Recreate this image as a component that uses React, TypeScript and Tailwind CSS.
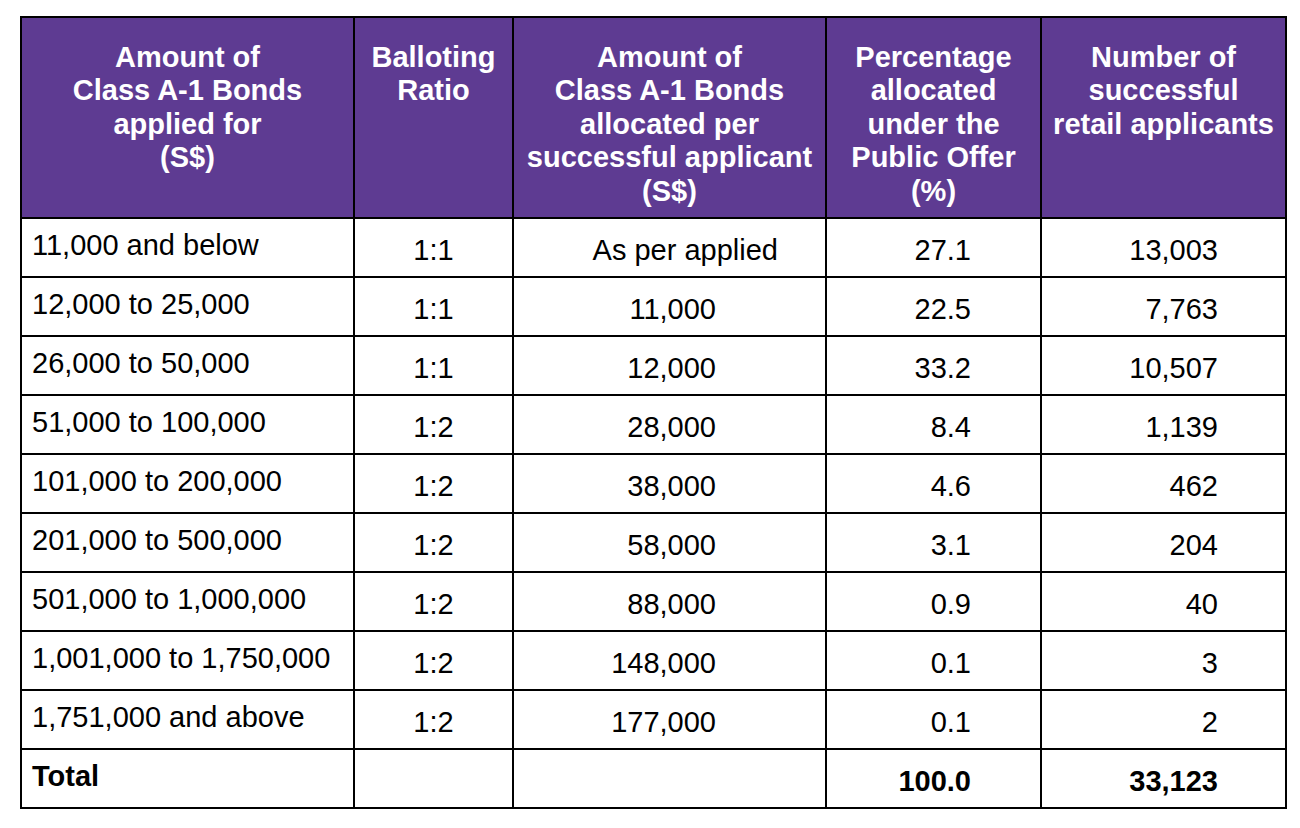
type Row = {
  range: string;
  ratio: string;
  allocated: string;
  pct: string;
  count: string;
  bold?: boolean;
};

const ROWS: Row[] = [
  { range: '11,000 and below', ratio: '1:1', allocated: 'As per applied', pct: '27.1', count: '13,003' },
  { range: '12,000 to 25,000', ratio: '1:1', allocated: '11,000', pct: '22.5', count: '7,763' },
  { range: '26,000 to 50,000', ratio: '1:1', allocated: '12,000', pct: '33.2', count: '10,507' },
  { range: '51,000 to 100,000', ratio: '1:2', allocated: '28,000', pct: '8.4', count: '1,139' },
  { range: '101,000 to 200,000', ratio: '1:2', allocated: '38,000', pct: '4.6', count: '462' },
  { range: '201,000 to 500,000', ratio: '1:2', allocated: '58,000', pct: '3.1', count: '204' },
  { range: '501,000 to 1,000,000', ratio: '1:2', allocated: '88,000', pct: '0.9', count: '40' },
  { range: '1,001,000 to 1,750,000', ratio: '1:2', allocated: '148,000', pct: '0.1', count: '3' },
  { range: '1,751,000 and above', ratio: '1:2', allocated: '177,000', pct: '0.1', count: '2' },
  { range: 'Total', ratio: '', allocated: '', pct: '100.0', count: '33,123', bold: true },
];

const HEADERS: string[][] = [
  ['Amount of', 'Class A-1 Bonds', 'applied for', '(S$)'],
  ['Balloting', 'Ratio'],
  ['Amount of', 'Class A-1 Bonds', 'allocated per', 'successful applicant', '(S$)'],
  ['Percentage', 'allocated', 'under the', 'Public Offer', '(%)'],
  ['Number of', 'successful', 'retail applicants'],
];

const cell = 'border-2 border-black align-top h-[59px] p-0';

export default function App() {
  return (
    <div className="min-h-screen bg-white pt-[16px] pl-[20px] font-['Liberation_Sans',Arial,sans-serif] text-[29px] leading-[33.4px] text-black">
      <table className="table-fixed border-collapse w-[1265px]">
        <colgroup>
          <col className="w-[333px]" />
          <col className="w-[159px]" />
          <col className="w-[313px]" />
          <col className="w-[215px]" />
          <col className="w-[245px]" />
        </colgroup>
        <thead>
          <tr className="h-[201px]">
            {HEADERS.map((lines, i) => (
              <th
                key={i}
                className="border-2 border-black bg-[#5e3b92] align-top pt-[23px] px-0 text-center font-bold text-white"
              >
                {lines.map((l) => (
                  <div key={l} className="whitespace-nowrap">{l}</div>
                ))}
              </th>
            ))}
          </tr>
        </thead>
        <tbody>
          {ROWS.map((r) => (
            <tr key={r.range} className={r.bold ? 'font-bold' : ''}>
              <td className={`${cell} pt-[10px] pl-[10px] text-left whitespace-nowrap`}>{r.range}</td>
              <td className={`${cell} pt-[15px] text-center font-normal`}>{r.ratio}</td>
              <td
                className={`${cell} pt-[15px] text-right ${r.allocated === 'As per applied' ? 'pr-[47px]' : 'pr-[109px]'}`}
              >
                {r.allocated}
              </td>
              <td className={`${cell} pt-[15px] text-right pr-[69px]`}>{r.pct}</td>
              <td className={`${cell} pt-[15px] text-right pr-[67px]`}>{r.count}</td>
            </tr>
          ))}
        </tbody>
      </table>
    </div>
  );
}
